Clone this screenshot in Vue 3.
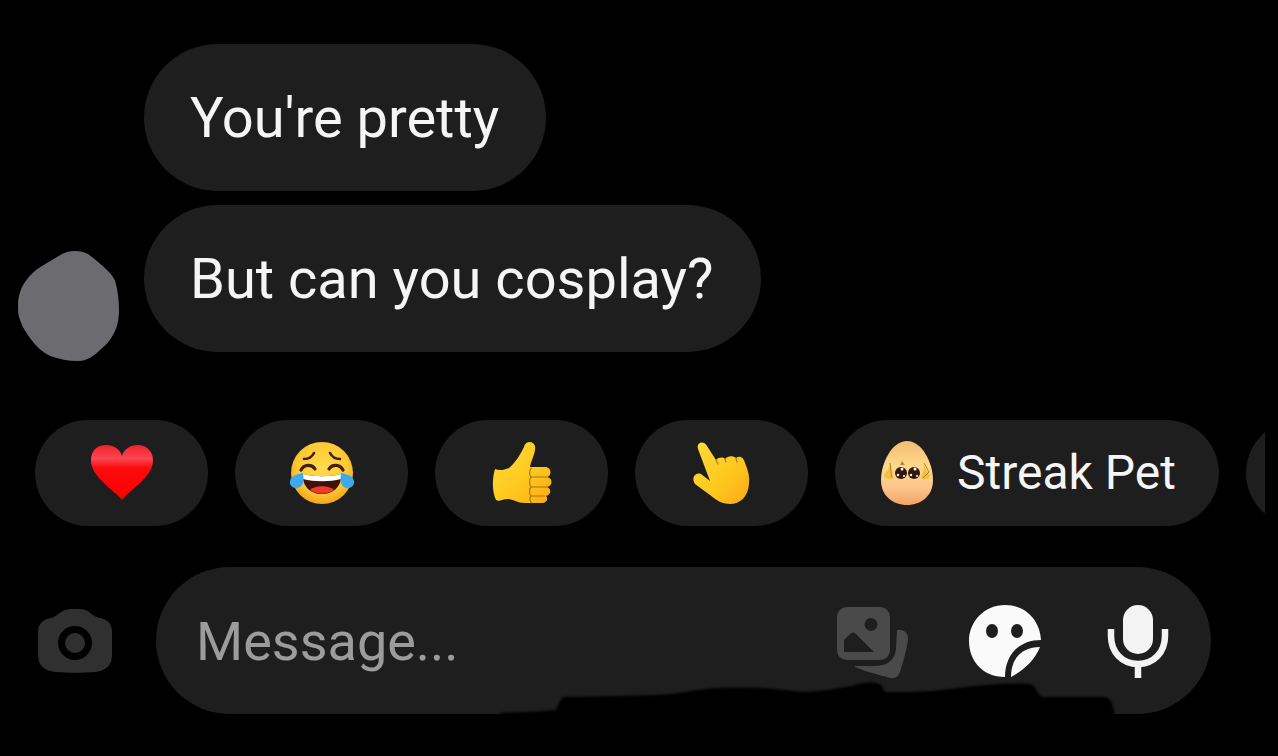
<script setup>
import { ref } from 'vue'

const messages = ["You're pretty", 'But can you cosplay?']
const draft = ref('')
</script>

<template>
  <main class="chat">
    <section class="thread">
      <svg class="avatar" viewBox="0 0 102 112" role="img" aria-label="Sender">
        <path d="M0 55C0 46 3 38 7 32C11 26 17 20 24 16L44 4C48 2 52 1 57 1C62 1 66 2 70 4C77 9 84 15 90 21C94 25 97 29 98 34C100 43 101 51 101 60C101 70 99 78 95 85C92 91 87 96 82 100C76 106 69 111 60 111C50 111 41 109 32 106C24 102 17 95 12 88C8 82 4 77 2 70C0 65 0 60 0 55Z" />
      </svg>
      <ul class="bubbles">
        <li v-for="m in messages" :key="m" class="bubble">{{ m }}</li>
      </ul>
    </section>

    <nav class="quick" aria-label="Quick replies">
      <button class="chip" aria-label="Heart">
        <svg class="emoji" viewBox="0 0 66 66">
          <defs>
            <linearGradient id="heart" x1="0" y1="0" x2="0" y2="1">
              <stop offset="0" stop-color="#f0222c" />
              <stop offset=".25" stop-color="#fb4650" />
              <stop offset=".42" stop-color="#fb0a0c" />
              <stop offset="1" stop-color="#ff0000" />
            </linearGradient>
          </defs>
          <path fill="url(#heart)" d="M33 60C29 54 22 51 14 42C7 35 2 29 2 20C2 10 9 5 17 5C25 5 31 9 33 16C35 9 41 5 49 5C57 5 64 11 64 20C64 29 59 35 52 42C44 50 37 54 33 60Z" />
        </svg>
      </button>
      <button class="chip" aria-label="Tears of joy">
        <svg class="emoji" viewBox="0 0 66 66">
          <defs>
            <radialGradient id="face" cx=".5" cy=".42" r=".58">
              <stop offset="0" stop-color="#ffdc4a" />
              <stop offset=".7" stop-color="#fdc934" />
              <stop offset="1" stop-color="#f2a51d" />
            </radialGradient>
          </defs>
          <circle cx="33" cy="33" r="31" fill="url(#face)" />
          <g fill="none" stroke="#43200b" stroke-width="2.6" stroke-linecap="round">
            <path d="M15 19C20 19 23 17 25 13M51 19C46 19 43 17 41 13" />
            <path d="M12 30C15 24 23 24 26 29M54 30C51 24 43 24 40 29" stroke-width="3.2" />
          </g>
          <path d="M14 34C25 37 41 37 52 34C53 46 45 54 33 54C21 54 13 46 14 34Z" fill="#40110a" />
          <path d="M14 34C25 37 41 37 52 34L52 39C41 42 25 42 14 39Z" fill="#fff" />
          <path d="M21 50C26 45 40 45 45 50C38 55 28 55 21 50Z" fill="#ef392c" />
          <path d="M14 33C15 40 15 46 9 48C4 49 0 45 1 41C2 36 8 34 14 33ZM52 33C51 40 51 46 57 48C62 49 66 45 65 41C64 36 58 34 52 33Z" fill="#3ba9ec" />
        </svg>
      </button>
      <button class="chip" aria-label="Thumbs up">
        <svg class="emoji" viewBox="0 0 66 66">
          <defs>
            <linearGradient id="hand" x1="0" y1="0" x2="1" y2="1">
              <stop offset="0" stop-color="#ffda3c" />
              <stop offset=".55" stop-color="#ffc91f" />
              <stop offset="1" stop-color="#f9a916" />
            </linearGradient>
          </defs>
          <path fill="url(#hand)" d="M6 29C10 31 15 30 20 28C27 22 31 15 35 7C36 1 44 0 46 6C47 13 42 20 41 27L56 27C63 27 63 36 58 37C64 38 64 46 58 47C63 49 62 55 57 56C60 59 57 63 53 63L36 63C28 63 24 59 19 59C14 59 10 62 7 60C3 52 3 39 6 29Z" />
          <path d="M58 37H43C40 37 40 29 43 28M58 47H43C40 47 40 39 42 37M56 56H43C40 56 40 49 42 47M42 56C40 58 41 62 43 63" fill="none" stroke="#a87907" stroke-width="1.2" />
        </svg>
      </button>
      <button class="chip" aria-label="Pointing hand">
        <svg class="emoji" viewBox="0 0 66 66">
          <path fill="url(#hand)" d="M9 9C7 2 15 0 18 6L27 20C30 17 34 17 36 19C38 16 44 15 47 18C51 15 55 18 56 23C59 30 61 37 60 44C59 57 51 64 41 64C33 64 27 60 21 55L6 44C2 38 6 32 12 34L21 41Z" />
          <path d="M27 20L29 24M36 19L37 22M47 18L48 22" fill="none" stroke="#b98108" stroke-width="1.3" stroke-linecap="round" />
        </svg>
      </button>
      <button class="chip pet">
        <svg class="egg" viewBox="0 0 52 66" aria-hidden="true">
          <defs>
            <linearGradient id="shell" x1="0" y1="0" x2="0" y2="1">
              <stop offset="0" stop-color="#f4bd72" />
              <stop offset=".4" stop-color="#ffd98b" />
              <stop offset=".75" stop-color="#fcc38a" />
              <stop offset="1" stop-color="#f3a264" />
            </linearGradient>
          </defs>
          <path fill="url(#shell)" d="M26 1C41 1 52 23 52 40C52 56 40 65 26 65C12 65 0 56 0 40C0 23 11 1 26 1Z" />
          <path d="M9 22C9 29 5 31 3 36C6 40 11 40 12 38C10 33 10 29 9 22ZM43 22C43 29 47 31 49 36C46 40 42 40 40 38C42 33 43 29 43 22Z" fill="#efc23d" />
          <path d="M9 23L11 38M43 23L48 32L42 38" fill="none" stroke="#ba7c2c" />
          <path d="M19 25L21 21L24 25Z" fill="#b98934" />
          <circle cx="20" cy="33" r="6" fill="#321710" />
          <circle cx="33" cy="33" r="6" fill="#321710" />
          <g fill="#fff">
            <circle cx="21" cy="29" r="1.5" /><circle cx="17" cy="35" r="1.2" /><circle cx="23" cy="36" r="1" />
            <circle cx="34" cy="29" r="1.5" /><circle cx="30" cy="35" r="1.2" /><circle cx="36" cy="36" r="1" />
          </g>
        </svg>
        <span>Streak Pet</span>
      </button>
      <button class="chip" aria-label="More"></button>
    </nav>

    <form class="composer" @submit.prevent>
      <button class="icon" type="button" aria-label="Camera">
        <svg class="camera" viewBox="0 0 74 64">
          <path fill="#303030" fill-rule="evenodd" d="M23 3C26 1 30 0 34 0H42C46 0 49 1 52 4C56 7 58 8 62 9C69 10 74 15 74 22V46C74 57 67 62 57 63C45 64 29 64 18 63C7 62 0 57 0 46V23C0 14 6 10 13 9C17 8 19 6 23 3ZM37 17a17 17 0 1 0 0 34a17 17 0 1 0 0-34ZM37 24a10 10 0 1 1 0 20a10 10 0 1 1 0-20Z" />
        </svg>
      </button>
      <div class="field">
        <input v-model="draft" type="text" placeholder="Message..." aria-label="Message" />
        <svg class="smear" viewBox="0 0 620 36" aria-hidden="true">
          <path d="M0 33C20 32 40 32 56 30L61 19C64 16 68 17 75 17L155 15C175 15 188 11 205 9C235 7 260 7 285 10C315 15 335 8 352 6C363 2 376 1 381 5L385 12H415C440 11 455 8 475 6C495 4 515 3 529 4C537 5 536 14 542 17H605C611 17 613 26 615 36H0Z" />
        </svg>
        <button class="icon" type="button" aria-label="Gallery">
          <svg class="gallery" viewBox="-5 -2 74 74">
            <path fill="#4a4a4a" fill-rule="evenodd" d="M12 1H43C50 1 54 5 54 12V43C54 50 50 54 43 54H12C5 54 1 50 1 43V12C1 5 5 1 12 1ZM35 12a6.500 6.500 0 1 0 0 13a6.500 6.500 0 1 0 0-13ZM8 46H38L20 28C18 26 16 26 14 28L8 34Z" />
            <path fill="#4a4a4a" d="M61 24C68 23 73 28 72 34C70 46 67 56 64 66C62 71 59 73 54 72C44 69 31 66 19 61V60C32 60 43 61 50 58C57 54 59 50 60 43Z" />
          </svg>
        </button>
        <button class="icon" type="button" aria-label="Stickers">
          <svg class="sticker" viewBox="1 1 72 72">
            <path fill="#fafafa" d="M37 1C57 1 72 16 73 36C51 36 37 51 37 73C15 73 1 57 1 37C1 17 17 1 37 1Z" />
            <path fill="#fafafa" d="M72 43C66 57 56 66 43 73C43 54 54 43 72 43Z" />
            <ellipse cx="24" cy="27" rx="6" ry="7" fill="#1e1e1e" />
            <ellipse cx="49" cy="27" rx="6" ry="7" fill="#1e1e1e" />
          </svg>
        </button>
        <button class="icon" type="button" aria-label="Voice message">
          <svg class="mic" viewBox="-2 0 64 74">
            <rect x="16" y="1" width="30" height="49" rx="15" fill="#f3f3f3" />
            <path d="M4 25V32C4 48 15 60 31 60C47 60 58 48 58 32V25M31 60V74" fill="none" stroke="#f3f3f3" stroke-width="6.500" />
          </svg>
        </button>
      </div>
    </form>
  </main>
</template>

<style>
body {
  background: #000;
}
</style>

<style scoped>
.chat {
  min-height: 100vh;
  box-sizing: border-box;
  padding-top: 44px;
  background: #000;
  color: #f5f5f5;
  font-family: Roboto, "Liberation Sans", sans-serif;
  overflow: hidden;
}
.thread {
  display: flex;
  align-items: flex-end;
  gap: 24px;
  padding-left: 18px;
}
.avatar {
  flex: none;
  width: 102px;
  height: 112px;
  fill: #6c6c70;
}
.bubbles {
  display: flex;
  flex-direction: column;
  align-items: flex-start;
  gap: 14px;
  margin: 0;
  padding: 0 0 10px;
  list-style: none;
}
.bubble {
  padding: 42px 47px 41px 46px;
  border-radius: 74px;
  background: #1e1e1e;
  font-size: 56px;
  line-height: 64px;
}
.quick {
  display: flex;
  gap: 27px;
  margin: 58px 13px 0 35px;
  overflow: hidden;
}
button {
  border: 0;
  padding: 0;
  background: none;
  color: inherit;
  font: inherit;
  cursor: pointer;
}
svg {
  display: block;
}
.chip {
  display: flex;
  flex: none;
  align-items: center;
  justify-content: center;
  min-width: 173px;
  padding: 20px 0;
  border-radius: 54px;
  background: #1e1e1e;
}
.emoji {
  width: 66px;
  height: 66px;
}
.pet {
  gap: 24px;
  padding: 20px 43px 20px 46px;
  font-size: 48px;
  line-height: 66px;
}
.egg {
  width: 52px;
  height: 66px;
}
.composer {
  display: flex;
  align-items: center;
  gap: 44px;
  margin: 41px 67px 41px 38px;
}
.icon {
  flex: none;
}
.camera {
  width: 74px;
  height: 64px;
}
.field {
  position: relative;
  display: flex;
  flex: 1;
  align-items: center;
  gap: 64px;
  min-width: 0;
  padding: 37px 42px 36px 40px;
  border-radius: 74px;
  background: #1e1e1e;
}
.field input {
  flex: 1;
  min-width: 0;
  height: 74px;
  padding: 0;
  border: 0;
  outline: 0;
  background: none;
  color: #f5f5f5;
  font: inherit;
  font-size: 54px;
}
.field input::placeholder {
  color: #9c9c9c;
  opacity: 1;
}
.gallery {
  width: 74px;
  height: 74px;
  overflow: visible;
}
.sticker {
  width: 72px;
  height: 72px;
}
.mic {
  width: 64px;
  height: 74px;
}
.smear {
  position: absolute;
  right: 91px;
  bottom: -2px;
  width: 620px;
  height: 36px;
  fill: #000;
  filter: blur(1px);
  pointer-events: none;
}
</style>
